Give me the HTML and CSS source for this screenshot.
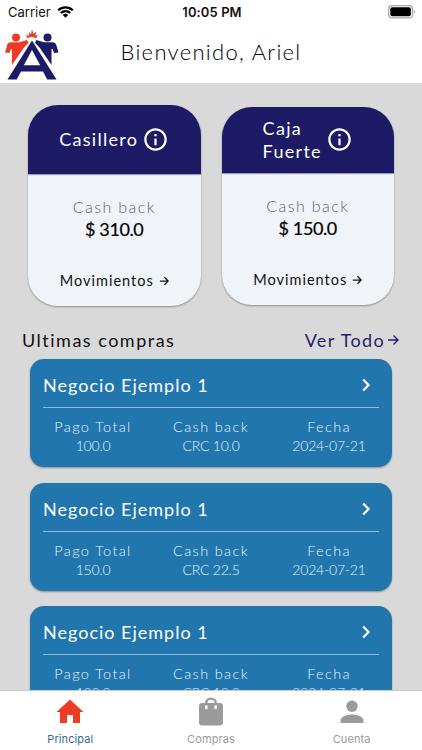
FILE: index.html
```html
<!DOCTYPE html>
<html lang="es">
<head>
    <meta charset="utf-8">
    <meta name="viewport" content="width=device-width, initial-scale=1">
    <title>Principal</title>
    <link rel="stylesheet" href="styles.css">
</head>
<body>

    <!-- Barra de estado -->
    <div class="status-bar">
        <div class="carrier">
            <span>Carrier</span>
            <svg class="wifi" viewBox="0 0 17 12">
                <path d="M1.2 4.3a10.6 10.6 0 0 1 14.6 0M3.8 7a6.8 6.8 0 0 1 9.4 0" fill="none" stroke="#000" stroke-width="2.1"/>
                <path d="M8.5 11.8 5.8 9a3.9 3.9 0 0 1 5.4 0z"/>
            </svg>
        </div>
        <div class="clock">10:05 PM</div>
        <svg class="battery" viewBox="0 0 28 14">
            <rect x=".7" y=".7" width="23.8" height="12.2" rx="3.5" fill="none" stroke="#a5a5a5" stroke-width="1.2"/>
            <rect x="2.3" y="2.3" width="20.6" height="9" rx="2"/>
            <path d="M25.8 4.7v4.2c1.6-.6 1.6-3.6 0-4.2z" fill="#a5a5a5"/>
        </svg>
    </div>

    <header class="header">
        <svg class="logo" viewBox="0 0 54 52">
            <g fill="#ee3b25">
                <circle cx="11" cy="8.6" r="4"/>
                <path d="M0 23.5 2.2 16Q3 13.2 6 13.2h8.500L22 11l1.600 2.700-4.800 5L7 36V20H6l-1.600 4z"/>
                <path d="m22 9.500-.5-4 2.300 1.600L24 3l2 2.200L27 0l1.400 5L31 2.600l-.4 4.300L33 5.500l-1.800 4Q26.600 6.200 22 9.500z"/>
            </g>
            <g fill="#1d1b66">
                <circle cx="42.500" cy="8.600" r="4"/>
                <path d="m53.500 23.500-2.200-7.500q-.8-2.800-3.800-2.800H39L31.500 11l-1.600 2.700 4.800 5L46.500 36V20h1l1.600 4z"/>
                <path fill-rule="evenodd" d="M27 11.500 2.500 50.600h9.200l4.300-8h22l4.200 8h9.300zM27 21l8.200 15.200H18.800z"/>
            </g>
        </svg>
        <h1 class="title">Bienvenido, Ariel</h1>
    </header>

    <main class="content">
        <section class="accounts">
            <article class="account">
                <div class="account-head">
                    <span class="account-name">Casillero</span>
                    <svg class="info" viewBox="0 0 24 24"><path d="M11 7h2v2h-2zm0 4h2v6h-2zm1-9C6.480 2 2 6.480 2 12s4.480 10 10 10 10-4.480 10-10S17.520 2 12 2zm0 18c-4.410 0-8-3.590-8-8s3.590-8 8-8 8 3.590 8 8-3.590 8-8 8z"/></svg>
                </div>
                <div class="account-body">
                    <div class="label">Cash back</div>
                    <div class="amount">$ 310.0</div>
                    <div class="moves"><span>Movimientos</span><svg class="arrow" viewBox="0 0 12 12"><path d="M1 6h10M6.500 1.500 11 6l-4.500 4.500"/></svg></div>
                </div>
            </article>
            <article class="account small">
                <div class="account-head">
                    <span class="account-name">Caja<br>Fuerte</span>
                    <svg class="info" viewBox="0 0 24 24"><path d="M11 7h2v2h-2zm0 4h2v6h-2zm1-9C6.480 2 2 6.480 2 12s4.480 10 10 10 10-4.480 10-10S17.520 2 12 2zm0 18c-4.410 0-8-3.590-8-8s3.590-8 8-8 8 3.590 8 8-3.590 8-8 8z"/></svg>
                </div>
                <div class="account-body">
                    <div class="label">Cash back</div>
                    <div class="amount">$ 150.0</div>
                    <div class="moves"><span>Movimientos</span><svg class="arrow" viewBox="0 0 12 12"><path d="M1 6h10M6.500 1.500 11 6l-4.500 4.500"/></svg></div>
                </div>
            </article>
        </section>

        <div class="section-head">
            <h2 class="section-title">Ultimas compras</h2>
            <a class="see-all"><span>Ver Todo</span><svg class="arrow" viewBox="0 0 12 12"><path d="M1 6h10M6.500 1.500 11 6l-4.500 4.500"/></svg></a>
        </div>

        <section class="purchases">
            <article class="purchase">
                <div class="purchase-head">
                    <span>Negocio Ejemplo 1</span>
                    <svg class="chevron" viewBox="0 0 8 14"><path d="m1.200 1.500 5.300 5.500-5.300 5.500"/></svg>
                </div>
                <div class="details">
                    <div><div class="key">Pago Total</div><div class="value">100.0</div></div>
                    <div><div class="key">Cash back</div><div class="value">CRC 10.0</div></div>
                    <div><div class="key">Fecha</div><div class="value">2024-07-21</div></div>
                </div>
            </article>
            <article class="purchase">
                <div class="purchase-head">
                    <span>Negocio Ejemplo 1</span>
                    <svg class="chevron" viewBox="0 0 8 14"><path d="m1.200 1.500 5.300 5.500-5.300 5.500"/></svg>
                </div>
                <div class="details">
                    <div><div class="key">Pago Total</div><div class="value">150.0</div></div>
                    <div><div class="key">Cash back</div><div class="value">CRC 22.5</div></div>
                    <div><div class="key">Fecha</div><div class="value">2024-07-21</div></div>
                </div>
            </article>
            <article class="purchase">
                <div class="purchase-head">
                    <span>Negocio Ejemplo 1</span>
                    <svg class="chevron" viewBox="0 0 8 14"><path d="m1.200 1.500 5.300 5.500-5.300 5.500"/></svg>
                </div>
                <div class="details">
                    <div><div class="key">Pago Total</div><div class="value">100.0</div></div>
                    <div><div class="key">Cash back</div><div class="value">CRC 10.0</div></div>
                    <div><div class="key">Fecha</div><div class="value">2024-07-21</div></div>
                </div>
            </article>
        </section>
    </main>

    <!-- Menu inferior -->
    <nav class="tabs">
        <a class="tab active">
            <svg viewBox="0 0 32 32"><path d="M13 27v-8h6v8h7V16h3.500L16 3.500 2.500 16H6v11z"/></svg>
            <span>Principal</span>
        </a>
        <a class="tab">
            <svg viewBox="0 0 32 32"><path fill-rule="evenodd" d="M7 7h3a6 5.500 0 0 1 12 0h3a3 3 0 0 1 3 3v16.500a3 3 0 0 1-3 3H7a3 3 0 0 1-3-3V10a3 3 0 0 1 3-3zm5.500 0h7a3.500 3.200 0 0 0-7 0zM10 9.500V12a1.300 1.300 0 0 0 2.600 0V9.500zm9.400 0V12a1.300 1.300 0 0 0 2.600 0V9.500z"/></svg>
            <span>Compras</span>
        </a>
        <a class="tab">
            <svg viewBox="0 0 32 32"><circle cx="16" cy="10.300" r="5.700"/><path d="M4.500 27v-2.500c0-4 7-6 11.500-6s11.500 2 11.500 6V27z"/></svg>
            <span>Cuenta</span>
        </a>
    </nav>

</body>
</html>
```
FILE: styles.css
```css
* {
    box-sizing: border-box;
}

body {
    margin: 0;
    height: 100vh;
    display: flex;
    flex-direction: column;
    overflow: hidden;
    background: #fff;
    font-family: Lato, "Open Sans", sans-serif;
    color: #111;
}

svg {
    display: block;
    flex: none;
}

/* Barra de estado */
.status-bar {
    height: 24px;
    flex: none;
    display: grid;
    grid-template-columns: 1fr auto 1fr;
    align-items: center;
    padding: 0 6px 0 8px;
    font-family: Inter, sans-serif;
    font-size: 13px;
}

.carrier {
    display: flex;
    align-items: center;
    gap: 6px;
}

.wifi {
    width: 17px;
    height: 12px;
}

.clock {
    font-weight: 600;
    letter-spacing: 0.1px;
}

.battery {
    width: 28px;
    height: 14px;
    justify-self: end;
}

/* Encabezado */
.header {
    height: 59px;
    flex: none;
    display: grid;
    grid-template-columns: 54px 1fr 54px;
    padding: 5px 5px 0;
}

.logo {
    width: 54px;
    height: 52px;
}

.title {
    margin: 8px 0 0;
    text-align: center;
    font-size: 22px;
    line-height: 30px;
    font-weight: 300;
    letter-spacing: 1.3px;
    color: #000;
}

.content {
    flex: 1;
    min-height: 0;
    overflow: hidden;
    background: #d9d9d9;
    padding: 22px 22px 0;
}

/* Cuentas */
.accounts {
    display: flex;
    align-items: center;
    gap: 21px;
    padding-left: 6px;
}

.account {
    width: 172.5px;
    height: 201px;
    border-radius: 30px;
    overflow: hidden;
    background: #f0f4f9;
    box-shadow: 0 1px 2px rgba(0, 0, 0, 0.35);
}

.account.small {
    height: 198px;
}

.account-head {
    height: 69px;
    display: flex;
    align-items: center;
    justify-content: center;
    gap: 4px;
    background: #1d1b66;
    color: #fff;
    box-shadow: 0 1px 1px rgba(29, 27, 102, 0.4);
}

.small .account-head {
    height: 66.5px;
}

.account-name {
    font-size: 18px;
    line-height: 23px;
    letter-spacing: 1.3px;
}

.info {
    width: 27px;
    height: 27px;
    fill: #fff;
}

.account-body {
    padding-top: 22px;
    text-align: center;
}

.label {
    font-size: 16px;
    line-height: 22px;
    font-weight: 300;
    letter-spacing: 1.4px;
    color: #606266;
}

.amount {
    font-size: 18px;
    line-height: 23px;
    letter-spacing: -0.4px;
    -webkit-text-stroke: 0.2px;
    color: #000;
}

.arrow {
    width: 10px;
    height: 10px;
    fill: none;
    stroke: currentColor;
    stroke-width: 1.5;
}

.moves {
    display: flex;
    align-items: center;
    justify-content: center;
    gap: 5px;
    margin-top: 30px;
    font-size: 14.5px;
    line-height: 20px;
    letter-spacing: 1px;
}

/* Ultimas compras */
.section-head {
    display: flex;
    justify-content: space-between;
    align-items: center;
    height: 30px;
    margin-top: 19px;
}

.section-title {
    margin: 0;
    font-size: 18px;
    font-weight: 400;
    letter-spacing: 1.5px;
}

.see-all {
    display: flex;
    align-items: center;
    gap: 2px;
    margin-right: 1px;
    font-size: 18px;
    letter-spacing: 1.35px;
    color: #251f68;
}

.see-all .arrow {
    width: 12px;
    height: 12px;
    stroke-width: 1.4;
}

.purchases {
    display: flex;
    flex-direction: column;
    gap: 15.5px;
    padding: 4px 8px 0;
}

.purchase {
    height: 108px;
    flex: none;
    padding: 0 13px;
    border-radius: 14px;
    background: #2276ae;
    color: #fff;
    box-shadow: 0 1px 2px rgba(0, 0, 0, 0.35);
}

.purchase-head {
    height: 49px;
    display: flex;
    align-items: center;
    justify-content: space-between;
    padding: 4px 9px 0 0;
    border-bottom: 1.5px solid #8fbbd8;
    font-size: 18px;
    letter-spacing: 1px;
}

.chevron {
    width: 8px;
    height: 14px;
    fill: none;
    stroke: #fff;
    stroke-width: 2.2;
}

.details {
    display: grid;
    grid-template-columns: 100px 136px 100px;
    padding-top: 9px;
    text-align: center;
    font-weight: 300;
    color: #e4f4ff;
}

.key {
    font-size: 14.5px;
    line-height: 19px;
    letter-spacing: 1.35px;
}

.value {
    font-size: 14px;
    line-height: 19px;
    letter-spacing: -0.2px;
}

/* Menu inferior */
.tabs {
    height: 60px;
    flex: none;
    display: grid;
    grid-template-columns: repeat(3, 1fr);
    border-top: 1px solid #ccc;
    background: #fff;
}

.tab {
    display: flex;
    flex-direction: column;
    align-items: center;
    padding-top: 5px;
    font-family: Inter, sans-serif;
    font-size: 11px;
    line-height: 14px;
    letter-spacing: 0.1px;
    color: #9b9b9b;
}

.tab svg {
    width: 32px;
    height: 32px;
    margin-bottom: 4px;
    fill: #9b9b9b;
}

.tab.active {
    color: #35699a;
}

.tab.active svg {
    fill: #ee3b25;
}
```
